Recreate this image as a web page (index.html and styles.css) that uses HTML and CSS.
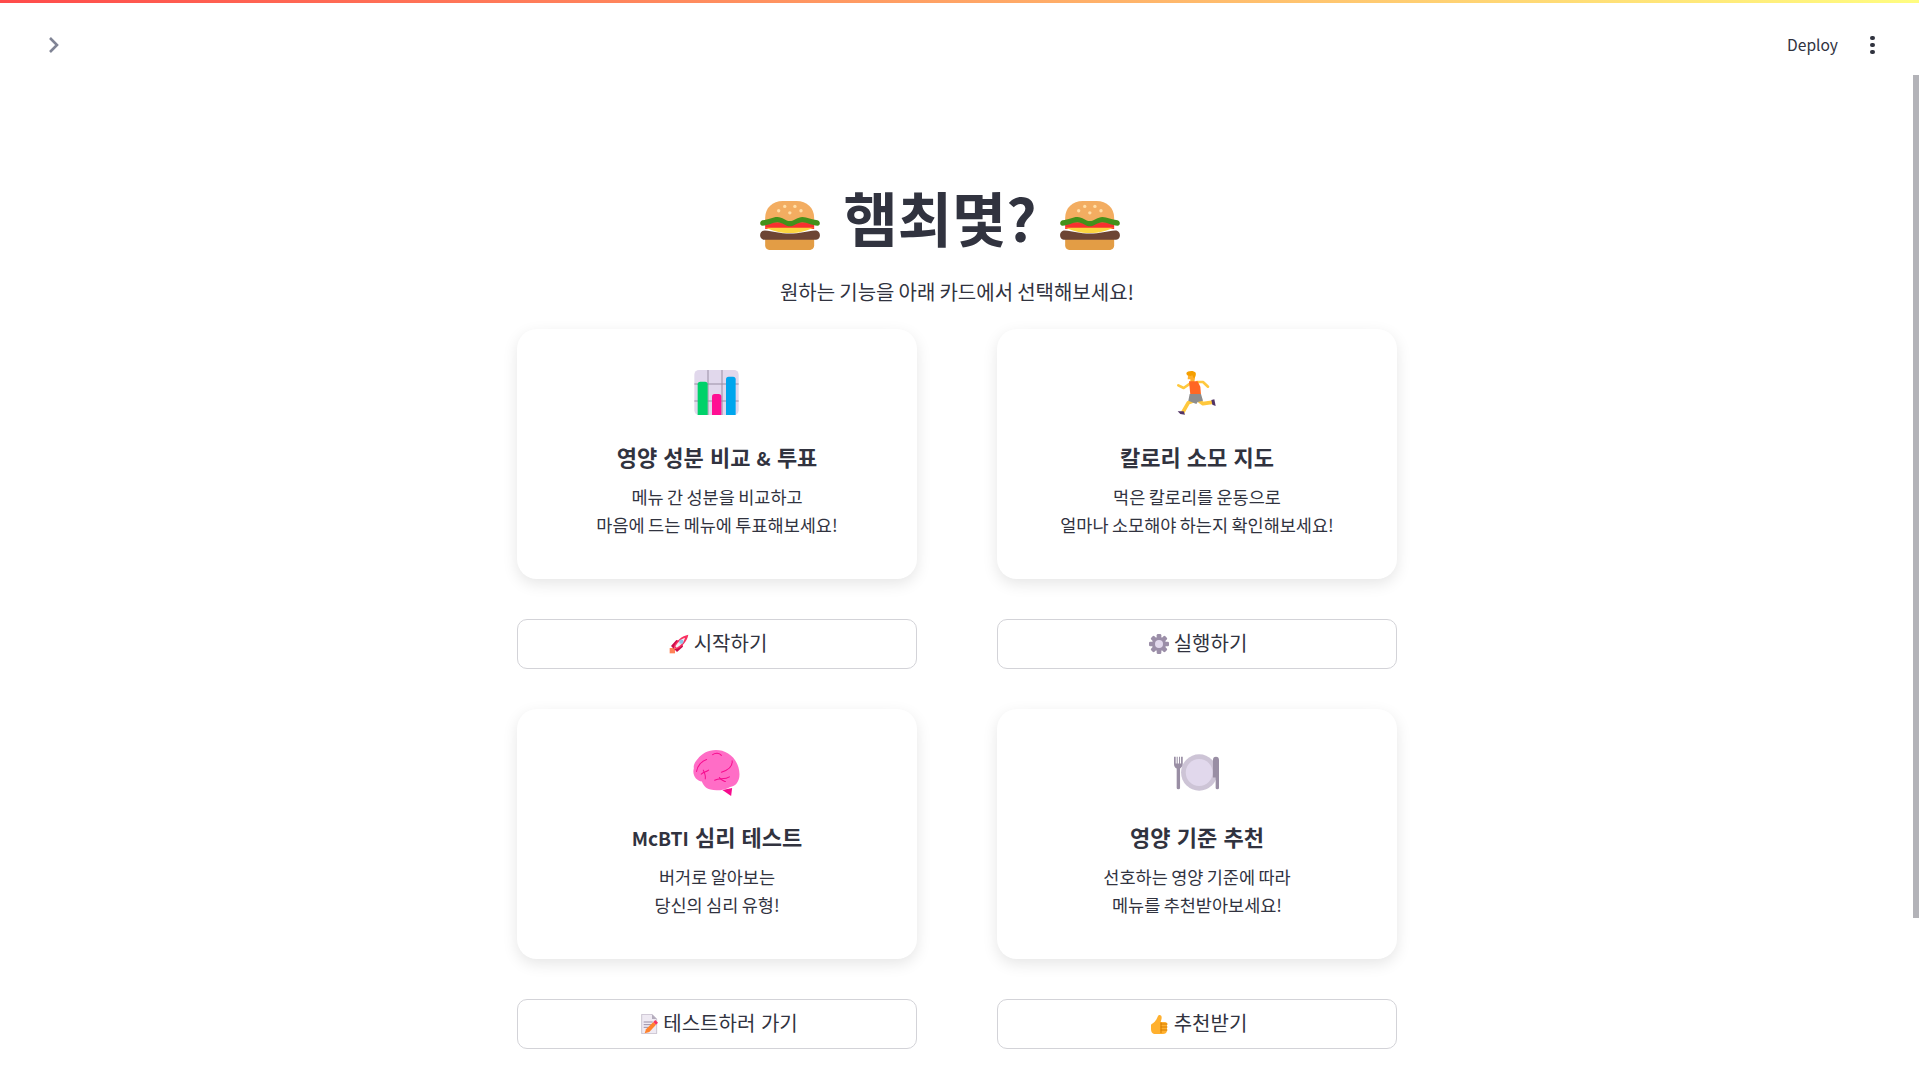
FILE: index.html
```html
<!DOCTYPE html>
<html lang="ko">
<head>
<meta charset="utf-8">
<title>햄최몇?</title>
<link rel="stylesheet" href="styles.css">
</head>
<body>
<svg class="defs" width="0" height="0" aria-hidden="true">
  <symbol id="burger" viewBox="33 35 177 145">
    <path fill="#F3AD61" d="M48 100 V85 C48 55 70 35 100 35 H141 C171 35 193 55 193 85 V100 Z"/>
    <g fill="#FFDEA7"><circle cx="88" cy="64" r="5"/><circle cx="106" cy="51" r="5"/><circle cx="121" cy="70" r="5"/><circle cx="136" cy="51" r="5"/><circle cx="154" cy="64" r="5"/></g>
    <path fill="#F8312F" d="M48 98 H193 V118 H48 Z"/>
    <path fill="#FCD53F" d="M48 114 H193 C170 122 150 130 121 130 C92 130 70 122 48 114 Z"/>
    <path fill="#44911B" d="M40 92 C58 90 70 82 84 82 C100 82 108 94 121 94 C134 94 144 82 158 82 C172 82 186 90 203 92 C212 94 212 108 203 108 C186 108 172 98 158 98 C144 98 134 110 121 110 C108 110 100 98 84 98 C70 98 58 108 40 108 C31 108 31 94 40 92 Z"/>
    <path fill="#E39D45" d="M48 146 H193 V166 C193 174 187 180 179 180 H62 C54 180 48 174 48 166 Z"/>
    <path fill="#6D4534" d="M47 122 C70 124 92 131 121 131 C150 131 172 124 196 122 C204 122 210 128 210 136 C210 144 204 150 196 150 H47 C39 150 33 144 33 136 C33 128 39 122 47 122 Z"/>
  </symbol>
  <symbol id="chart" viewBox="42 28 133 135">
    <rect x="42" y="28" width="133" height="135" rx="14" fill="#E1D8EC"/>
    <path stroke="#998EA4" stroke-width="3" fill="none" d="M83 28 V163 M125 28 V163 M42 70 H175 M42 121 H175"/>
    <path fill="#00D26A" d="M52 163 V71 Q52 63 60 63 H74 Q82 63 82 71 V163 Z"/>
    <path fill="#FF0F93" d="M95 163 V108 Q95 100 103 100 H115 Q123 100 123 108 V163 Z"/>
    <path fill="#00A6ED" d="M137 163 V56 Q137 48 145 48 H158 Q166 48 166 56 V163 Z"/>
  </symbol>
  <symbol id="runner" viewBox="44 26 126 138">
    <g fill="none" stroke="#FFC83D" stroke-linecap="round" stroke-linejoin="round">
      <path stroke-width="8" d="M90 66 L70 80 L54 72"/>
      <path stroke-width="8" d="M110 62 L128 62 L143 76"/>
      <path stroke-width="11" d="M100 118 L84 124 L68 152"/>
      <path stroke-width="11" d="M116 118 L128 127 L154 123"/>
    </g>
    <path fill="#FFB02E" d="M84 34 H104 V50 L102 62 H90 V54 H82 Z"/>
    <path fill="#F59F00" d="M78 36 C80 28 100 26 106 34 C108 42 104 50 100 50 L96 42 L90 44 L80 42 Z"/>
    <path fill="#FF6723" d="M86 60 H112 L120 76 L122 100 L90 100 Z"/>
    <path fill="#8D8D8D" d="M88 98 H122 L128 118 L112 122 L108 128 L84 118 Z"/>
    <path fill="#533566" d="M52 150 L70 150 L74 160 L60 158 Z M153 116 L162 114 L166 134 L156 130 Z"/>
  </symbol>
  <symbol id="brain" viewBox="38 28 140 137">
    <path fill="#F70A8D" d="M127 147 L156 141 L153 165 Z"/>
    <path fill="#FF6DC6" d="M42 82 C40 74 46 62 54 54 C64 40 84 28 108 28 C140 28 176 52 178 100 C178 122 166 136 150 138 C136 148 108 150 92 146 C76 144 68 128 66 122 C50 120 36 104 42 82 Z"/>
    <g fill="none" stroke="#F70A8D" stroke-width="3" stroke-linecap="round">
      <path d="M98 42 C106 36 118 36 124 44"/>
      <path d="M50 92 C52 76 66 60 80 56"/>
      <path d="M64 100 C74 92 78 94 86 88"/>
      <path d="M70 88 C74 96 78 104 76 114"/>
      <path d="M156 60 C158 76 144 88 124 94"/>
      <path d="M104 118 C118 110 134 118 148 108"/>
      <path d="M118 110 C122 118 130 120 136 122"/>
    </g>
  </symbol>
  <symbol id="plate" viewBox="42 42 134 110">
    <circle cx="117" cy="97" r="54" fill="#CDC4D6"/>
    <circle cx="117" cy="97" r="40" fill="#E1D8EC"/>
    <path fill="#998EA4" d="M42 50 H47 V70 H50 V50 H53 V70 H57 V50 H60 V70 H63 V50 H68 V72 C68 80 62 84 60 85 V143 Q60 147 55 147 Q50 147 50 143 V85 C46 84 42 80 42 72 Z"/>
    <path fill="#998EA4" d="M158 60 Q158 50 167 50 Q176 50 176 60 V143 Q176 147 171 147 Q166 147 166 143 V112 H158 Z"/>
  </symbol>
  <symbol id="rocket" viewBox="0 0 60 60">
    <path fill="#FF8257" d="M2 42 L18 42 L18 58 L2 58 Z"/>
    <path fill="#CA0B4A" d="M6 36 L22 18 L30 20 L14 44 Z M24 54 L42 38 L40 30 L16 46 Z"/>
    <path fill="#F92F60" d="M14 38 C22 20 38 6 58 2 C54 22 40 38 22 46 Z"/>
    <path fill="#F3EFF6" d="M19 37 C26 24 36 15 48 11 C45 24 36 34 23 41 Z"/>
    <circle cx="37" cy="23" r="6.5" fill="#8FC4E6"/>
  </symbol>
  <symbol id="gear" viewBox="0 0 60 60">
    <g fill="#9B8EA8">
      <circle cx="30" cy="30" r="21"/>
      <g><rect x="23" y="0" width="14" height="60" rx="4"/><rect x="23" y="0" width="14" height="60" rx="4" transform="rotate(45 30 30)"/><rect x="23" y="0" width="14" height="60" rx="4" transform="rotate(90 30 30)"/><rect x="23" y="0" width="14" height="60" rx="4" transform="rotate(135 30 30)"/></g>
    </g>
    <circle cx="30" cy="30" r="12" fill="#E1D8EC"/>
  </symbol>
  <symbol id="memo" viewBox="-8 0 60 60">
    <path fill="#EFEAF3" stroke="#B4ACBC" stroke-width="2" d="M3 1 H34 L48 15 V59 H3 Z"/>
    <path fill="#B4ACBC" d="M34 1 V15 H48 Z"/>
    <path stroke="#998EA4" stroke-width="3" d="M9 24 H36 M9 32 H32 M9 40 H24"/>
    <path fill="#FF822D" d="M16 46 L38 24 L46 32 L26 54 L12 58 Z"/>
    <path fill="#F92F60" d="M38 24 L44 18 L52 26 L46 32 Z"/>
  </symbol>
  <symbol id="thumb" viewBox="0 0 60 60">
    <path fill="#FFB02E" d="M8 30 C12 28 22 20 26 8 C28 0 38 2 38 10 C38 16 36 20 35 24 H48 C54 24 56 30 54 34 V50 C54 56 48 60 42 60 H20 C10 60 6 54 6 44 V34 C6 32 7 31 8 30 Z"/>
    <path stroke="#D67D00" stroke-width="3" stroke-linecap="round" d="M36 30 H54 M36 39 H54 M36 48 H54 M36 26 V56"/>
  </symbol>
</svg>

<div class="app">
  <div class="decoration"></div>
  <header class="toolbar">
    <svg class="chevron" viewBox="0 0 12 18"><path d="M2 2 L9 9 L2 16"/></svg>
    <div class="actions">
      <span class="deploy">Deploy</span>
      <span class="kebab"><i></i><i></i><i></i></span>
    </div>
  </header>
  <main class="main">
    <h1 class="title">
      <svg class="burger"><use href="#burger"/></svg>
      <span class="title-text">햄최몇?</span>
      <svg class="burger"><use href="#burger"/></svg>
    </h1>
    <p class="subtitle">원하는 기능을 아래 카드에서 선택해보세요!</p>
    <div class="grid">
      <section class="card">
        <div class="emoji"><svg class="icon-chart"><use href="#chart"/></svg></div>
        <h3 class="card-title">영양 성분 비교 <span class="latin">&amp;</span> 투표</h3>
        <p class="card-text">메뉴 간 성분을 비교하고<br>마음에 드는 메뉴에 투표해보세요!</p>
      </section>
      <section class="card">
        <div class="emoji"><svg class="icon-runner"><use href="#runner"/></svg></div>
        <h3 class="card-title">칼로리 소모 지도</h3>
        <p class="card-text">먹은 칼로리를 운동으로<br>얼마나 소모해야 하는지 확인해보세요!</p>
      </section>
      <button class="btn"><svg class="btn-icon"><use href="#rocket"/></svg>시작하기</button>
      <button class="btn"><svg class="btn-icon"><use href="#gear"/></svg>실행하기</button>
      <section class="card">
        <div class="emoji"><svg class="icon-brain"><use href="#brain"/></svg></div>
        <h3 class="card-title"><span class="latin">McBTI</span> 심리 테스트</h3>
        <p class="card-text">버거로 알아보는<br>당신의 심리 유형!</p>
      </section>
      <section class="card">
        <div class="emoji"><svg class="icon-plate"><use href="#plate"/></svg></div>
        <h3 class="card-title">영양 기준 추천</h3>
        <p class="card-text">선호하는 영양 기준에 따라<br>메뉴를 추천받아보세요!</p>
      </section>
      <button class="btn"><svg class="btn-icon"><use href="#memo"/></svg>테스트하러 가기</button>
      <button class="btn"><svg class="btn-icon"><use href="#thumb"/></svg>추천받기</button>
    </div>
  </main>
  <div class="scroll-thumb"></div>
</div>
</body>
</html>
```
FILE: styles.css
```css
* { box-sizing: border-box; }
html, body { margin: 0; height: 100%; overflow: hidden; background: #fff; }
body {
  font-family: "Noto Sans CJK KR", "Noto Sans", sans-serif;
  color: #31333F;
}
.defs { display: block; width: 0; height: 0; }
.app { position: relative; height: 100vh; display: flex; flex-direction: column; overflow: hidden; }
.decoration { height: 3px; flex: none; background: linear-gradient(90deg, #FF4B4B, #FFFD80); }
.toolbar {
  height: 84px; flex: none;
  display: flex; align-items: center; justify-content: space-between;
  padding: 0 43px 0 48px;
}
.chevron { width: 12px; height: 18px; }
.chevron path { fill: none; stroke: #808495; stroke-width: 2.6; }
.actions { display: flex; align-items: center; gap: 32px; }
.deploy { font-size: 15.6px; line-height: 24px; padding-bottom: 2px; }
.kebab { display: flex; flex-direction: column; gap: 2.4px; width: 6px; }
.kebab i { display: block; width: 4.6px; height: 4.6px; border-radius: 50%; background: #31333F; }
.main { display: flex; flex-direction: column; align-items: center; padding: 82px 5px 0 0; }
.title {
  margin: 0; height: 100px; padding-right: 34px;
  display: flex; align-items: center; gap: 23px;
  font-size: 59px; font-weight: 700; line-height: 100px;
}
.title-text { margin-top: -5px; }
.latin { font-size: 0.87em; }
.burger { width: 60px; height: 49px; margin-top: 12px; }
.subtitle { margin: 5px 0 0; font-size: 20px; line-height: 36px; height: 36px; word-spacing: -1.5px; }
.grid { margin-top: 19px; display: grid; grid-template-columns: 400px 400px; column-gap: 80px; row-gap: 40px; }
.card {
  height: 250px; background: #fff; border-radius: 20px;
  box-shadow: 0 5px 15px rgba(0, 0, 0, 0.1);
  padding-top: 41px; text-align: center;
}
.emoji { height: 45px; display: flex; align-items: center; justify-content: center; padding-right: 2px; }
.icon-chart { width: 45px; height: 45px; }
.icon-runner { width: 42px; height: 46px; }
.icon-brain { width: 48px; height: 46px; }
.icon-plate { width: 45px; height: 37px; }
.card-title { margin: 26px 0 0; height: 30px; font-size: 22px; line-height: 30px; font-weight: 700; }
.card-text { margin: 12px 0 0; font-size: 17.5px; line-height: 28px; word-spacing: -1.5px; }
.btn {
  height: 50px; background: #fff; border: 1px solid #d3d3d8; border-radius: 10px;
  display: flex; align-items: center; justify-content: center; gap: 5px;
  font-family: inherit; font-size: 20px; color: #31333F; padding: 0 0 4px 2px;
}
.btn-icon { width: 20px; height: 20px; margin-top: 4px; }
.scroll-thumb { position: absolute; right: 0; top: 75px; width: 6px; height: 843px; background: #b3b3b8; }
```
